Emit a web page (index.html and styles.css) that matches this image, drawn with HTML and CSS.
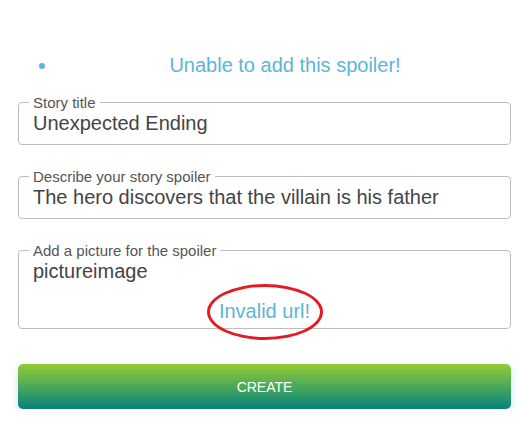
FILE: index.html
```html
<!DOCTYPE html>
<html lang="en">
<head>
<meta charset="utf-8">
<title>Add spoiler</title>
<link rel="stylesheet" href="styles.css">
</head>
<body>
<ul class="errors">
  <li>Unable to add this spoiler!</li>
</ul>
<form class="spoiler-form">
  <fieldset class="field">
    <legend class="field-label">Story title</legend>
    <input class="field-input" type="text" value="Unexpected Ending">
  </fieldset>
  <fieldset class="field">
    <legend class="field-label">Describe your story spoiler</legend>
    <input class="field-input" type="text" value="The hero discovers that the villain is his father">
  </fieldset>
  <fieldset class="field">
    <legend class="field-label">Add a picture for the spoiler</legend>
    <input class="field-input" type="text" value="pictureimage">
    <div class="field-error"><span class="error-text">Invalid url!</span></div>
  </fieldset>
  <button class="create-btn" type="button">CREATE</button>
</form>
</body>
</html>
```
FILE: styles.css
```css
html, body {
  background: #ffffff;
}
body {
  margin: 8px;
  font-family: "Liberation Sans", Arial, sans-serif;
}
.errors {
  margin: 46px 0 17px;
  padding: 0 10px 0 50px;
  color: #5bb6d6;
  font-size: 20px;
  line-height: 23px;
  text-align: center;
}
.spoiler-form {
  margin: 0 11px 0 10px;
  display: flex;
  flex-direction: column;
}
.field {
  margin: 0;
  padding: 0 10px 8px;
  border: 1px solid #bdbdbd;
  border-radius: 4px;
  min-width: 0;
}
.field + .field {
  margin-top: 23px;
}
.field-label {
  padding: 0 4px;
  font-size: 15px;
  line-height: 17px;
  color: #555555;
}
.field-input {
  display: block;
  box-sizing: border-box;
  width: 100%;
  height: 25px;
  margin: 0;
  padding: 0 4px;
  border: none;
  outline: none;
  background: transparent;
  font-family: "Liberation Sans", Arial, sans-serif;
  font-size: 20px;
  color: #444444;
}
.field-error {
  margin: 16px 0 -3px;
  text-align: center;
  font-size: 20px;
  line-height: 23px;
  color: #5bb6d6;
}
.error-text {
  position: relative;
  display: inline-block;
}
.error-text::after {
  content: "";
  position: absolute;
  left: 50%;
  top: 50%;
  width: 110px;
  height: 50px;
  margin-left: -58px;
  margin-top: -28px;
  border: 3px solid #e31b23;
  border-radius: 50%;
}
.create-btn {
  margin-top: 35px;
  height: 45px;
  border: none;
  border-radius: 5px;
  background: linear-gradient(to bottom, #96cb33 0%, #4aa95a 50%, #06807c 100%);
  box-shadow: 0 4px 10px rgba(110, 180, 225, 0.35);
  color: #ffffff;
  font-family: "Liberation Sans", Arial, sans-serif;
  font-size: 14px;
  text-transform: uppercase;
}
```
